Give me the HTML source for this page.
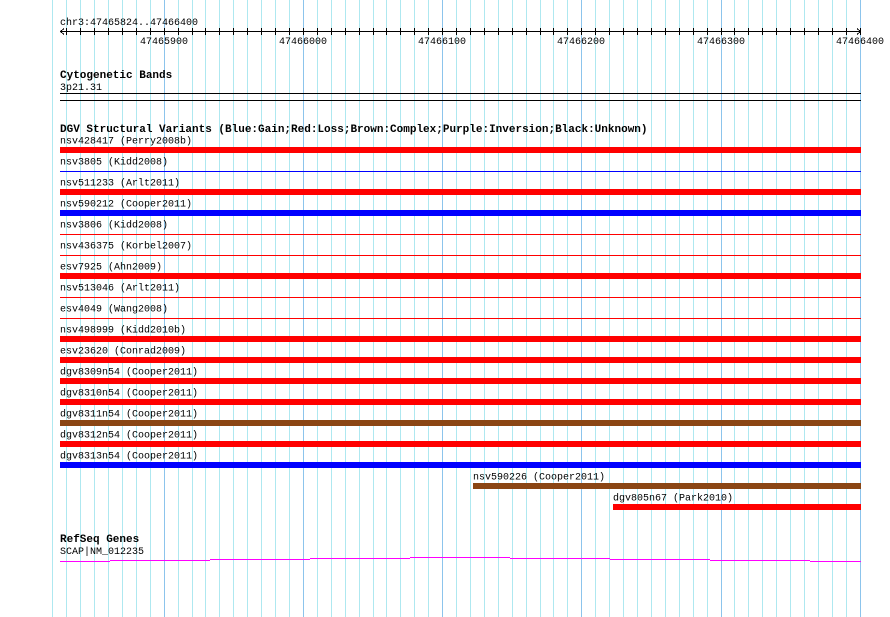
<!DOCTYPE html>
<html><head><meta charset="utf-8"><style>
html,body{margin:0;padding:0;background:#fff;}
svg{display:block;font-family:"Liberation Mono","DejaVu Sans Mono",monospace;font-size:10px;}
.b{font-weight:bold;font-size:11px;}
</style></head><body>
<svg width="890" height="617" xmlns="http://www.w3.org/2000/svg" shape-rendering="crispEdges">
<g id="grid"></g>
<g id="main"></g>
<script>
var ns="http://www.w3.org/2000/svg";
function el(t,a,p,txt){var e=document.createElementNS(ns,t);for(var k in a)e.setAttribute(k,a[k]);if(txt)e.textContent=txt;(p||document.getElementById('main')).appendChild(e);return e;}
var g=document.getElementById('grid');
function X(bp){return 859.7-(47466400-bp)*1.392;}
for(var k=-8;k<=50;k++){var bp=47465900+k*10;var x=Math.round(X(bp))+0.5;
 el('line',{x1:x,y1:0,x2:x,y2:617,stroke:(k%10==0)?'#8cc4ec':'#aee8f0','stroke-width':1},g);}
// ruler
el('text',{x:60,y:25},null,'chr3:47465824..47466400');
el('line',{x1:60,y1:31.5,x2:861,y2:31.5,stroke:'#000'});
el('path',{d:'M64 28.5 L60.5 31.5 L64 34.5 M857 28.5 L860.5 31.5 L857 34.5',stroke:'#000',fill:'none'});
for(var k=-7;k<=50;k++){var x=Math.round(X(47465900+k*10))+0.5;el('line',{x1:x,y1:28,x2:x,y2:35,stroke:'#000'});}
for(var k=0;k<=5;k++){var bp=47465900+k*100;el('text',{x:Math.round(X(bp)),y:44,'text-anchor':'middle'},null,String(bp));}
el('text',{x:60,y:78,'class':'b'},null,'Cytogenetic Bands');
el('text',{x:60,y:90},null,'3p21.31');
el('line',{x1:60,y1:93.5,x2:861,y2:93.5,stroke:'#000'});
el('line',{x1:60,y1:100.5,x2:861,y2:100.5,stroke:'#000'});
el('text',{x:60,y:132,'class':'b'},null,'DGV Structural Variants (Blue:Gain;Red:Loss;Brown:Complex;Purple:Inversion;Black:Unknown)');
var R='#ff0000',B='#0000ff',N='#8b4513';
var rows=[['nsv428417 (Perry2008b)',R,1],['nsv3805 (Kidd2008)',B,0],['nsv511233 (Arlt2011)',R,1],['nsv590212 (Cooper2011)',B,1],['nsv3806 (Kidd2008)',R,0],['nsv436375 (Korbel2007)',R,0],['esv7925 (Ahn2009)',R,1],['nsv513046 (Arlt2011)',R,0],['esv4049 (Wang2008)',R,0],['nsv498999 (Kidd2010b)',R,1],['esv23620 (Conrad2009)',R,1],['dgv8309n54 (Cooper2011)',R,1],['dgv8310n54 (Cooper2011)',R,1],['dgv8311n54 (Cooper2011)',N,1],['dgv8312n54 (Cooper2011)',R,1],['dgv8313n54 (Cooper2011)',B,1],['nsv590226 (Cooper2011)',N,1,473],['dgv805n67 (Park2010)',R,1,613]];
rows.forEach(function(r,i){var y=146.5+21*i;var x0=r[3]||60;
 el('text',{x:x0,y:y-3},null,r[0]);
 if(r[2])el('rect',{x:x0,y:Math.round(y),width:861-x0,height:6,fill:r[1]});
 else el('line',{x1:x0,y1:Math.round(y)+3.5,x2:861,y2:Math.round(y)+3.5,stroke:r[1]});
});
el('text',{x:60,y:542,'class':'b'},null,'RefSeq Genes');
el('text',{x:60,y:554},null,'SCAP|NM_012235');
var segs=[[60,110,561],[110,210,560],[210,310,559],[310,410,558],[410,510,557],[510,610,558],[610,710,559],[710,810,560],[810,861,561]];
segs.forEach(function(s){el('line',{x1:s[0],y1:s[2]+0.5,x2:s[1],y2:s[2]+0.5,stroke:'#ff00ff'});});
</script>
</svg>
</body></html>
